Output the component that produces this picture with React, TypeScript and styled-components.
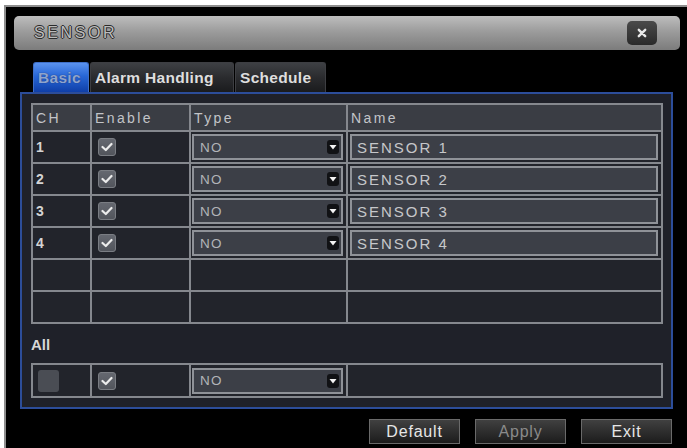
import React from 'react';
import styled, { createGlobalStyle } from 'styled-components';

const GlobalStyle = createGlobalStyle`
  html, body {
    margin: 0;
    padding: 0;
    background: #fff;
  }
  body {
    font-family: "Liberation Sans", Arial, sans-serif;
  }
`;

const Page = styled.div`
  width: 687px;
  height: 448px;
  box-sizing: border-box;
  padding: 5px 0 0 4px;
  background: #fff;
  overflow: hidden;
`;

const Frame = styled.div`
  height: 100%;
  box-sizing: border-box;
  border-left: 2px solid #8e8e8e;
  border-top: 2px solid #8e8e8e;
  background: #000;
  padding: 9px 0 0 8px;
  display: flex;
  flex-direction: column;
`;

const TitleBar = styled.div`
  width: 666px;
  height: 34px;
  box-sizing: border-box;
  border-radius: 5px;
  background: linear-gradient(#bdbdbd 0%, #9c9c9c 45%, #7c7c7c 100%);
  display: flex;
  align-items: center;
  justify-content: space-between;
  padding: 0 23px 0 20px;
`;

const Title = styled.span`
  font-size: 16px;
  letter-spacing: 2.6px;
  color: #bcbcbc;
  text-shadow: -1px 0 #2a2a2a, 1px 0 #2a2a2a, 0 -1px #2a2a2a, 0 1px #2a2a2a;
`;

const CloseButton = styled.div`
  width: 30px;
  height: 24px;
  border-radius: 5px;
  background: linear-gradient(#4a4a4a, #2a2a2a);
  display: flex;
  align-items: center;
  justify-content: center;
`;

const Body = styled.div`
  margin-top: 12px;
  padding-left: 6px;
  display: flex;
  flex-direction: column;
`;

const Tabs = styled.div`
  display: flex;
  gap: 1px;
  margin-left: 13px;
  height: 30px;
`;

const Tab = styled.div<{ $active?: boolean; $w: number }>`
  width: ${(p) => p.$w}px;
  box-sizing: border-box;
  border-radius: 3px 3px 0 0;
  display: flex;
  align-items: center;
  padding-left: 4px;
  font-size: 15.5px;
  font-weight: bold;
  letter-spacing: 0.3px;
  background: ${(p) =>
    p.$active
      ? 'linear-gradient(#5a92ee 0%, #2766d6 45%, #0f3fa8 100%)'
      : 'linear-gradient(#3e4044 0%, #2a2b2e 50%, #1a1b1d 100%)'};
  color: ${(p) => (p.$active ? '#8ea4cf' : '#dedede')};
  text-shadow: ${(p) => (p.$active ? '0 0 1px #1a2e66' : 'none')};
  border: 1px solid ${(p) => (p.$active ? '#3e6fc8' : '#3d3e42')};
  border-bottom: none;
`;

const Panel = styled.div`
  width: 653px;
  box-sizing: border-box;
  border: 2px solid #2c4d9a;
  background: #1f2129;
  padding: 9px 8px 9px 9px;
`;

const Grid = styled.table`
  width: 632px;
  border-collapse: collapse;
  table-layout: fixed;
`;

const Col = styled.col<{ $w?: number }>`
  width: ${(p) => (p.$w ? `${p.$w}px` : 'auto')};
`;

const HeadRow = styled.tr`
  height: 27px;
  background: #3a3d44;
`;

const Row = styled.tr<{ $h?: number }>`
  height: ${(p) => p.$h ?? 32}px;
  background: #22242b;
`;

const HeadCell = styled.th`
  border: 2px solid #85888e;
  padding: 0 0 0 3px;
  text-align: left;
  font-weight: normal;
  font-size: 14px;
  letter-spacing: 2.4px;
  color: #c2c4c8;
`;

const Cell = styled.td`
  border: 2px solid #85888e;
  padding: 0;
  vertical-align: middle;
`;

const Num = styled.span`
  display: block;
  padding-left: 3px;
  font-size: 14px;
  font-weight: bold;
  color: #d4d4d4;
`;

const Check = styled.div`
  width: 18px;
  height: 18px;
  margin-left: 6px;
  box-sizing: border-box;
  border-radius: 3px;
  border: 1px solid #7a7d83;
  background: linear-gradient(#656870, #52555c);
  display: flex;
  align-items: center;
  justify-content: center;
`;

const Blank = styled.div`
  width: 21px;
  height: 22px;
  margin-left: 5px;
  border-radius: 3px;
  background: #4a4d54;
`;

const Field = styled.div<{ $big?: boolean }>`
  height: 26px;
  margin: ${(p) => (p.$big ? '0 3px 0 2px' : '0 3px 0 1px')};
  box-sizing: border-box;
  border: 2px solid #8f9298;
  background: #3c3f47;
  display: flex;
  align-items: center;
  justify-content: space-between;
  padding: 0 2px 0 ${(p) => (p.$big ? 5 : 6)}px;
  color: ${(p) => (p.$big ? '#c6c7ca' : '#b2b4b8')};
  font-size: ${(p) => (p.$big ? 15 : 13.5)}px;
  letter-spacing: ${(p) => (p.$big ? 2 : 1.2)}px;
`;

const Arrow = styled.span`
  width: 12px;
  height: 14px;
  border-radius: 3px;
  background: #111215;
  display: flex;
  align-items: center;
  justify-content: center;
`;

const AllLabel = styled.div`
  height: 39px;
  display: flex;
  align-items: center;
  padding-top: 2px;
  box-sizing: border-box;
  font-size: 15px;
  font-weight: bold;
  color: #d6d6d6;
`;

const Buttons = styled.div`
  width: 652px;
  margin-top: 10px;
  display: flex;
  justify-content: flex-end;
  gap: 15px;
`;

const Button = styled.div<{ $dim?: boolean }>`
  width: 91px;
  height: 25px;
  box-sizing: border-box;
  border: 1px solid #6a6a6a;
  background: linear-gradient(#404040, #1c1c1c);
  color: ${(p) => (p.$dim ? '#8a8a8a' : '#e6e6e6')};
  font-size: 16px;
  letter-spacing: 0.8px;
  display: flex;
  align-items: center;
  justify-content: center;
`;

const CheckMark = () => (
  <svg width="12" height="10" viewBox="0 0 12 10">
    <path d="M1.5 5 L4.8 8 L10.5 2" fill="none" stroke="#ececec" strokeWidth="2.2" strokeLinecap="round" strokeLinejoin="round" />
  </svg>
);

const DownTriangle = () => (
  <svg width="8" height="6" viewBox="0 0 8 6">
    <path d="M0.5 1 L7.5 1 L4 5.5 Z" fill="#f4f4f4" />
  </svg>
);

const TypeSelect = ({ value }: { value: string }) => (
  <Field>
    {value}
    <Arrow>
      <DownTriangle />
    </Arrow>
  </Field>
);

const sensors = [1, 2, 3, 4];

export default function App() {
  return (
    <Page>
      <GlobalStyle />
      <Frame>
        <TitleBar>
          <Title>SENSOR</Title>
          <CloseButton>
            <svg width="10" height="10" viewBox="0 0 10 10">
              <path d="M1.8 1.8 L8.2 8.2 M8.2 1.8 L1.8 8.2" stroke="#e8e8e8" strokeWidth="2.4" strokeLinecap="round" />
            </svg>
          </CloseButton>
        </TitleBar>
        <Body>
          <Tabs>
            <Tab $active $w={56}>Basic</Tab>
            <Tab $w={144}>Alarm Handling</Tab>
            <Tab $w={91}>Schedule</Tab>
          </Tabs>
          <Panel>
            <Grid>
              <colgroup>
                <Col $w={59} />
                <Col $w={99} />
                <Col $w={157} />
                <Col />
              </colgroup>
              <thead>
                <HeadRow>
                  <HeadCell>CH</HeadCell>
                  <HeadCell>Enable</HeadCell>
                  <HeadCell>Type</HeadCell>
                  <HeadCell>Name</HeadCell>
                </HeadRow>
              </thead>
              <tbody>
                {sensors.map((n) => (
                  <Row key={n}>
                    <Cell>
                      <Num>{n}</Num>
                    </Cell>
                    <Cell>
                      <Check>
                        <CheckMark />
                      </Check>
                    </Cell>
                    <Cell>
                      <TypeSelect value="NO" />
                    </Cell>
                    <Cell>
                      <Field $big>SENSOR {n}</Field>
                    </Cell>
                  </Row>
                ))}
                <Row>
                  <Cell />
                  <Cell />
                  <Cell />
                  <Cell />
                </Row>
                <Row>
                  <Cell />
                  <Cell />
                  <Cell />
                  <Cell />
                </Row>
              </tbody>
            </Grid>
            <AllLabel>All</AllLabel>
            <Grid>
              <colgroup>
                <Col $w={59} />
                <Col $w={99} />
                <Col $w={157} />
                <Col />
              </colgroup>
              <tbody>
                <Row $h={33}>
                  <Cell>
                    <Blank />
                  </Cell>
                  <Cell>
                    <Check>
                      <CheckMark />
                    </Check>
                  </Cell>
                  <Cell>
                    <TypeSelect value="NO" />
                  </Cell>
                  <Cell />
                </Row>
              </tbody>
            </Grid>
          </Panel>
          <Buttons>
            <Button>Default</Button>
            <Button $dim>Apply</Button>
            <Button>Exit</Button>
          </Buttons>
        </Body>
      </Frame>
    </Page>
  );
}
